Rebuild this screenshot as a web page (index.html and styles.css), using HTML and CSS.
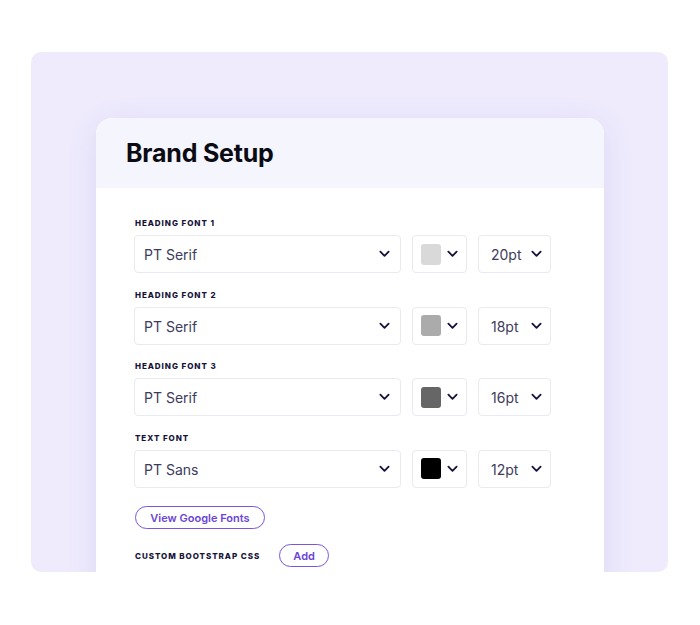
FILE: index.html
```html
<!DOCTYPE html>
<html>
<head>
<meta charset="utf-8">
<link rel="stylesheet" href="styles.css">
</head>
<body>
<div class="panel">
  <div class="card">
    <div class="card-head"><h1 class="title">Brand Setup</h1></div>
    <div class="card-body">
      <div class="field">
        <div class="label">Heading Font 1</div>
        <div class="row">
          <div class="box font-box"><span>PT Serif</span><svg class="chev" viewBox="0 0 12 8"><path d="M1.5 1.5 6 6 10.5 1.5"/></svg></div>
          <div class="box color-box"><span class="swatch" style="background:#d9d9d9"></span><svg class="chev" viewBox="0 0 12 8"><path d="M1.5 1.5 6 6 10.5 1.5"/></svg></div>
          <div class="box size-box"><span>20pt</span><svg class="chev" viewBox="0 0 12 8"><path d="M1.5 1.5 6 6 10.5 1.5"/></svg></div>
        </div>
      </div>
      <div class="field">
        <div class="label">Heading Font 2</div>
        <div class="row">
          <div class="box font-box"><span>PT Serif</span><svg class="chev" viewBox="0 0 12 8"><path d="M1.5 1.5 6 6 10.5 1.5"/></svg></div>
          <div class="box color-box"><span class="swatch" style="background:#ababab"></span><svg class="chev" viewBox="0 0 12 8"><path d="M1.5 1.5 6 6 10.5 1.5"/></svg></div>
          <div class="box size-box"><span>18pt</span><svg class="chev" viewBox="0 0 12 8"><path d="M1.5 1.5 6 6 10.5 1.5"/></svg></div>
        </div>
      </div>
      <div class="field">
        <div class="label">Heading Font 3</div>
        <div class="row">
          <div class="box font-box"><span>PT Serif</span><svg class="chev" viewBox="0 0 12 8"><path d="M1.5 1.5 6 6 10.5 1.5"/></svg></div>
          <div class="box color-box"><span class="swatch" style="background:#666666"></span><svg class="chev" viewBox="0 0 12 8"><path d="M1.5 1.5 6 6 10.5 1.5"/></svg></div>
          <div class="box size-box"><span>16pt</span><svg class="chev" viewBox="0 0 12 8"><path d="M1.5 1.5 6 6 10.5 1.5"/></svg></div>
        </div>
      </div>
      <div class="field">
        <div class="label">Text Font</div>
        <div class="row">
          <div class="box font-box"><span>PT Sans</span><svg class="chev" viewBox="0 0 12 8"><path d="M1.5 1.5 6 6 10.5 1.5"/></svg></div>
          <div class="box color-box"><span class="swatch" style="background:#000000"></span><svg class="chev" viewBox="0 0 12 8"><path d="M1.5 1.5 6 6 10.5 1.5"/></svg></div>
          <div class="box size-box"><span>12pt</span><svg class="chev" viewBox="0 0 12 8"><path d="M1.5 1.5 6 6 10.5 1.5"/></svg></div>
        </div>
      </div>
      <button class="pill wide">View Google Fonts</button>
      <div class="custom">
        <div class="label inline">Custom Bootstrap CSS</div>
        <button class="pill">Add</button>
      </div>
    </div>
  </div>
</div>
</body>
</html>
```
FILE: styles.css
```css
html, body {
  margin: 0;
  padding: 0;
  background: #ffffff;
}
body {
  font-family: "Inter", "Noto Sans", sans-serif;
  width: 700px;
  height: 625px;
  overflow: hidden;
}
.panel {
  margin: 52px 0 0 31px;
  width: 637px;
  height: 520px;
  background: #efebfd;
  border-radius: 10px;
  overflow: hidden;
  padding: 66px 0 0 65px;
  box-sizing: border-box;
}
.card {
  width: 508px;
  height: 520px;
  background: #ffffff;
  border-radius: 16px 16px 0 0;
  box-shadow: 0 6px 30px rgba(90, 70, 170, 0.12);
}
.card-head {
  height: 70px;
  background: #f5f5fd;
  border-radius: 16px 16px 0 0;
  padding-left: 30px;
  display: flex;
  align-items: center;
}
.title {
  margin: 0;
  font-size: 25px;
  font-weight: 700;
  color: #0b0b14;
  letter-spacing: -0.2px;
}
.card-body {
  padding: 30px 0 0 38px;
}
.field {
  margin-bottom: 16.6px;
}
.label {
  font-size: 8px;
  line-height: 10px;
  font-weight: 800;
  letter-spacing: 0.95px;
  text-transform: uppercase;
  color: #16123a;
  margin-bottom: 7px;
  margin-left: 1px;
  white-space: nowrap;
}
.row {
  display: flex;
  gap: 11px;
}
.box {
  height: 38px;
  box-sizing: border-box;
  border: 1px solid #e9e9f0;
  border-radius: 4px;
  display: flex;
  align-items: center;
  justify-content: space-between;
  font-size: 14px;
  color: #3d3b5c;
}
.box span {
  padding-top: 1px;
}
.font-box {
  width: 267px;
  padding: 0 10px 0 9px;
}
.color-box {
  width: 55px;
  padding: 0 8px 0 8px;
}
.size-box {
  width: 73px;
  padding: 0 8px 0 12px;
}
.swatch {
  width: 20px;
  height: 20px;
  border-radius: 3px;
}
.chev {
  width: 11px;
  height: 8px;
  fill: none;
  stroke: #16123a;
  stroke-width: 2;
  stroke-linecap: round;
  stroke-linejoin: round;
}
.pill {
  display: inline-flex;
  align-items: center;
  justify-content: center;
  height: 23px;
  box-sizing: border-box;
  border: 1.5px solid #7a55e0;
  border-radius: 12px;
  background: #ffffff;
  color: #6a45d6;
  font-family: inherit;
  font-size: 11px;
  font-weight: 600;
  padding: 0 14px;
  width: 50px;
  white-space: nowrap;
}
.pill.wide {
  width: 130px;
  margin: 2px 0 0 1px;
}
.custom {
  display: flex;
  align-items: center;
  gap: 19px;
  margin-top: 15px;
}
.label.inline {
  margin-bottom: 0;
}
```
